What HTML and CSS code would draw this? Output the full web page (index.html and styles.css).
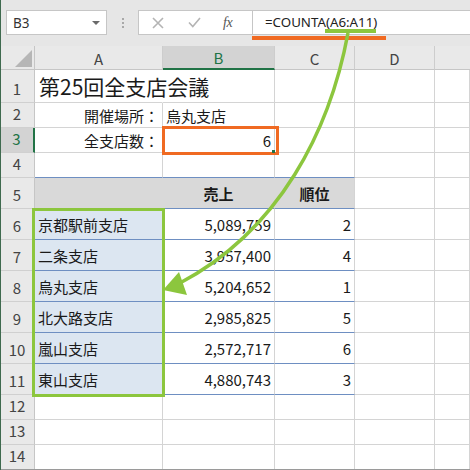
FILE: index.html
```html
<!DOCTYPE html>
<html lang="ja">
<head>
<meta charset="utf-8">
<title>COUNTA</title>
<link rel="stylesheet" href="styles.css">
</head>
<body>
<div class="app">
  <div class="fbar">
    <div class="namebox"><span class="nb-text">B3</span><span class="dd"></span></div>
    <div class="grip"><span></span><span></span><span></span></div>
    <div class="fctl">
      <svg class="ic ic-x" width="12" height="12" viewBox="0 0 12 12"><path d="M1 1 L11 11 M11 1 L1 11" stroke="#b4b4b4" stroke-width="1.6" fill="none"/></svg>
      <svg class="ic ic-ok" width="13" height="11" viewBox="0 0 13 11"><path d="M1 5.5 L4.8 9.5 L12 1" stroke="#b4b4b4" stroke-width="1.6" fill="none"/></svg>
      <span class="fx">fx</span>
    </div>
    <div class="finput">=COUNTA(A6:A11)</div>
  </div>

  <div class="sheet">
    <div class="corner"><span class="tri"></span></div>
    <div class="ch">A</div>
    <div class="ch sel">B</div>
    <div class="ch">C</div>
    <div class="ch">D</div>
    <div class="ch last"></div>

    <div class="rh">1</div>
    <div class="c title noright">第25回全支店会議</div>
    <div class="c"></div><div class="c"></div><div class="c"></div><div class="c"></div>

    <div class="rh">2</div>
    <div class="c r">開催場所：</div>
    <div class="c">烏丸支店</div>
    <div class="c"></div><div class="c"></div><div class="c"></div>

    <div class="rh sel">3</div>
    <div class="c r">全支店数：</div>
    <div class="c r">6</div>
    <div class="c"></div><div class="c"></div><div class="c"></div>

    <div class="rh">4</div>
    <div class="c bb"></div><div class="c bb"></div><div class="c bb"></div>
    <div class="c"></div><div class="c"></div>

    <div class="rh">5</div>
    <div class="c hd hdin"></div>
    <div class="c hd hdin m">売上</div>
    <div class="c hd m">順位</div>
    <div class="c"></div><div class="c"></div>

    <div class="rh">6</div>
    <div class="c bb name">京都駅前支店</div><div class="c bb r">5,089,759</div><div class="c bb r">2</div>
    <div class="c"></div><div class="c"></div>

    <div class="rh">7</div>
    <div class="c bb name">二条支店</div><div class="c bb r">3,957,400</div><div class="c bb r">4</div>
    <div class="c"></div><div class="c"></div>

    <div class="rh">8</div>
    <div class="c bb name">烏丸支店</div><div class="c bb r">5,204,652</div><div class="c bb r">1</div>
    <div class="c"></div><div class="c"></div>

    <div class="rh">9</div>
    <div class="c bb name">北大路支店</div><div class="c bb r">2,985,825</div><div class="c bb r">5</div>
    <div class="c"></div><div class="c"></div>

    <div class="rh">10</div>
    <div class="c bb name">嵐山支店</div><div class="c bb r">2,572,717</div><div class="c bb r">6</div>
    <div class="c"></div><div class="c"></div>

    <div class="rh">11</div>
    <div class="c bb name">東山支店</div><div class="c bb r">4,880,743</div><div class="c bb r">3</div>
    <div class="c"></div><div class="c"></div>

    <div class="rh">12</div>
    <div class="c"></div><div class="c"></div><div class="c"></div><div class="c"></div><div class="c"></div>
    <div class="rh">13</div>
    <div class="c"></div><div class="c"></div><div class="c"></div><div class="c"></div><div class="c"></div>
    <div class="rh">14</div>
    <div class="c"></div><div class="c"></div><div class="c"></div><div class="c"></div><div class="c"></div>
  </div>

  <svg class="overlay" width="470" height="470" viewBox="0 0 470 470">
    <rect x="252" y="36" width="134" height="4" fill="#f06a22"/>
    <rect x="325" y="29" width="51" height="4" fill="#8cc63e"/>
    <rect x="163.5" y="127.5" width="114" height="26" fill="none" stroke="#f06a22" stroke-width="3"/>
    <rect x="272" y="150" width="3" height="3" fill="#217346"/>
    <rect x="33.5" y="209.5" width="130" height="186" fill="none" stroke="#8cc63e" stroke-width="3"/>
    <path d="M348 33 C330 130 280 230 180 283" fill="none" stroke="#8cc63e" stroke-width="3.5"/>
    <polygon points="163,290 179,272 187,295" fill="#8cc63e"/>
  </svg>
</div>
</body>
</html>
```

FILE: styles.css
```css
html, body {
  margin: 0;
  padding: 0;
}
body {
  width: 470px;
  height: 470px;
  overflow: hidden;
  background: #ffffff;
  font-family: "Noto Sans CJK JP", "Noto Sans", sans-serif;
}
.app {
  position: relative;
  width: 470px;
  height: 470px;
  overflow: hidden;
  background: #ffffff;
}
.app::after {
  content: "";
  position: absolute;
  inset: 0;
  box-shadow: inset 1px 0 0 #3f6a4f, inset 0 -1px 0 #9a9a9a;
  pointer-events: none;
}

/* formula bar */
.fbar {
  height: 46px;
  box-sizing: border-box;
  background: #e6e6e6;
  display: flex;
  align-items: flex-start;
  padding: 10px 0 0 6px;
}
.namebox {
  width: 101px;
  height: 25px;
  box-sizing: border-box;
  background: #ffffff;
  border: 1px solid #c6c6c6;
  display: flex;
  align-items: center;
  justify-content: space-between;
  padding: 0 6px 0 6px;
}
.nb-text {
  font-family: "Noto Sans", sans-serif;
  font-size: 13.5px;
  color: #333333;
}
.dd {
  width: 0;
  height: 0;
  border-left: 4px solid transparent;
  border-right: 4px solid transparent;
  border-top: 4px solid #6a6a6a;
}
.grip {
  width: 31px;
  height: 25px;
  display: flex;
  flex-direction: column;
  align-items: center;
  justify-content: center;
  gap: 2px;
}
.grip span {
  width: 2px;
  height: 2px;
  background: #a8a8a8;
}
.fctl {
  width: 114px;
  height: 25px;
  box-sizing: border-box;
  background: #ffffff;
  border: 1px solid #c6c6c6;
  border-right: none;
  display: flex;
  align-items: center;
  padding-left: 13px;
}
.ic-x { margin-right: 24px; }
.ic-ok { margin-right: 22px; }
.fx {
  font-family: "Liberation Serif", serif;
  font-style: italic;
  font-size: 14px;
  color: #555555;
  letter-spacing: -0.5px;
}
.finput {
  flex: 1;
  height: 25px;
  box-sizing: border-box;
  background: #ffffff;
  border: 1px solid #c6c6c6;
  border-right: none;
  padding-left: 12px;
  font-family: "Noto Sans", sans-serif;
  font-size: 13.3px;
  line-height: 23px;
  color: #222222;
  white-space: nowrap;
}

/* sheet grid */
.sheet {
  display: grid;
  grid-template-columns: 35px 128px 112px 80px 80px 35px;
  grid-template-rows: 24px 33px 25px 25px 25px repeat(7, 31px) 25px 25px 25px;
}
.sheet > div {
  box-sizing: border-box;
  min-width: 0;
}
.corner {
  background: #e9e9e9;
  border-right: 1px solid #c6c6c6;
  border-bottom: 1px solid #c6c6c6;
  position: relative;
}
.tri {
  position: absolute;
  right: 2px;
  bottom: 2px;
  width: 0;
  height: 0;
  border-left: 17px solid transparent;
  border-bottom: 17px solid #b6b6b6;
}
.ch {
  background: #e9e9e9;
  border-right: 1px solid #cdcdcd;
  border-bottom: 1px solid #c6c6c6;
  display: flex;
  align-items: center;
  justify-content: center;
  font-size: 15px;
  color: #444444;
  line-height: 1;
  padding-top: 1px;
}
.ch.sel {
  background: #d3d3d3;
  color: #217346;
  border-bottom: 2px solid #217346;
}
.ch.last { border-right: none; }
.rh {
  background: #e9e9e9;
  border-right: 1px solid #c6c6c6;
  border-bottom: 1px solid #d0d0d0;
  display: flex;
  align-items: flex-end;
  justify-content: center;
  font-size: 15px;
  line-height: 15px;
  padding-bottom: 6px;
  color: #444444;
}
.rh.sel {
  background: #d3d3d3;
  color: #217346;
  border-right: 2px solid #217346;
}
.c {
  border-right: 1px solid #d4d4d4;
  border-bottom: 1px solid #d4d4d4;
  display: flex;
  align-items: center;
  padding: 0 3px 0 3px;
  font-size: 15px;
  line-height: 1;
  color: #1a1a1a;
  white-space: nowrap;
}
.c.r { justify-content: flex-end; }
.c.m { justify-content: center; }
.c.title {
  font-size: 21px;
  padding-left: 4px;
  overflow: visible;
  position: relative;
  z-index: 1;
}
.c.noright { border-right-color: transparent; }
.c.bb { border-bottom-color: #6e8fc2; }
.c.hd {
  background: #d9d9d9;
  border-bottom-color: #6e8fc2;
  font-weight: bold;
}
.c.hdin { border-right-color: #d9d9d9; }
.c.name {
  background: #dce6f1;
  border-right-color: #dce6f1;
}

.overlay {
  position: absolute;
  left: 0;
  top: 0;
  pointer-events: none;
}
```
